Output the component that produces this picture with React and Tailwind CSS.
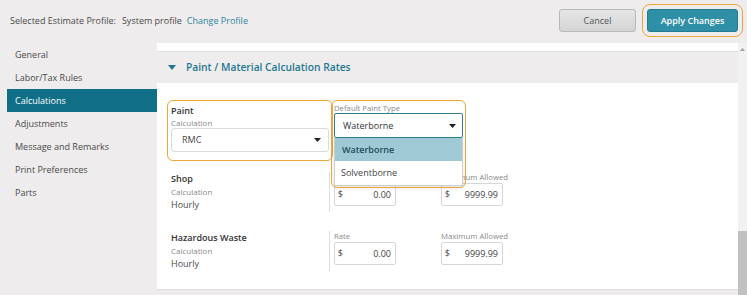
import React from 'react';

const navItems = [
  'General',
  'Labor/Tax Rules',
  'Calculations',
  'Adjustments',
  'Message and Remarks',
  'Print Preferences',
  'Parts',
];

const Caret = () => (
  <svg width="7" height="4" viewBox="0 0 7 4">
    <path d="M0 0h7L3.5 4z" fill="#222" />
  </svg>
);

const MoneyInput = ({ value }) => (
  <div className="flex h-[23px] w-[62px] items-center justify-between rounded-[2px] border border-[#d6d6d6] bg-white pl-[3px] pr-[4px] text-[9px] text-[#444]">
    <span className="text-[8.5px]">$</span>
    <span>{value}</span>
  </div>
);

const RateRow = ({ name, className = '' }) => (
  <div className={`flex ${className}`}>
    <div className="w-[158px] shrink-0">
      <div className="text-[9px] font-semibold leading-[14px] text-[#333]">{name}</div>
      <div className="text-[8px] leading-[12px] text-[#8a8a8a]">Calculation</div>
      <div className="text-[9px] leading-[14px] text-[#4a4a4a]">Hourly</div>
    </div>
    <div className="flex gap-[45px] border-l border-[#dedede] pl-[4px]">
      <div className="w-[62px]">
        <div className="text-[7.75px] leading-[11px] text-[#8a8a8a]">Rate</div>
        <MoneyInput value="0.00" />
      </div>
      <div className="w-[62px]">
        <div className="whitespace-nowrap text-[7.75px] leading-[11px] text-[#8a8a8a]">Maximum Allowed</div>
        <MoneyInput value="9999.99" />
      </div>
    </div>
  </div>
);

const App = () => {
  return (
    <div className="flex h-[295px] w-[747px] flex-col overflow-hidden bg-[#eeecec] font-['Open_Sans',sans-serif] text-[#4a4a4a]">
      {/* top bar */}
      <div className="flex h-[43px] shrink-0 items-center justify-between pb-[2px] pl-[10px] pr-[9px]">
        <div className="text-[9px] leading-none text-[#4a4a4a]">
          Selected Estimate Profile:
          <span className="ml-[6px]">System profile</span>
          <span className="ml-[5px] text-[#2b84a0]">Change Profile</span>
        </div>
        <div className="flex items-center gap-[11px]">
          <button className="h-[23px] w-[77px] rounded-[3px] border border-[#b8b8b8] bg-gradient-to-b from-[#e6e6e6] to-[#d4d4d4] text-[9px] text-[#555]">
            Cancel
          </button>
          <button className="h-[23px] w-[91px] rounded-[3px] border border-[#237b92] bg-[#2f8fa7] text-[9px] font-semibold text-white outline-[1.5px] outline-solid outline-[#f0a53b] outline-offset-[4px]">
            Apply Changes
          </button>
        </div>
      </div>

      <div className="flex min-h-0 flex-1">
        {/* sidebar */}
        <nav className="w-[157px] shrink-0 pl-[7px]">
          {navItems.map((item) => (
            <div
              key={item}
              className={
                item === 'Calculations'
                  ? 'h-[23px] bg-[#116e87] pl-[8px] text-[9px] leading-[23px] text-white'
                  : 'h-[23px] pl-[8px] text-[9px] leading-[23px] text-[#4a4a4a]'
              }
            >
              {item}
            </div>
          ))}
        </nav>

        {/* main panel */}
        <div className="flex min-w-0 flex-1 flex-col">
          <div className="h-[9px] shrink-0 border-b border-[#e2e2e2] bg-white" />
          <div className="flex h-[31px] shrink-0 items-center gap-[10px] pl-[11px]">
            <svg width="8" height="5" viewBox="0 0 8 5">
              <path d="M0 0h8L4 5z" fill="#1f7891" />
            </svg>
            <span className="text-[10.25px] font-semibold text-[#1f7891]">Paint / Material Calculation Rates</span>
          </div>

          <div className="flex-1 border-b border-[#dcdcdc] bg-white pl-[14px] pt-[20px]">
            {/* Paint row */}
            <div className="flex items-start gap-[5px]">
              <div className="mt-[1px] w-[158px] rounded-[2px] pb-[5px] outline-[1.5px] outline-solid outline-[#f0a53b] outline-offset-[3px]">
                <div className="text-[9px] font-semibold leading-[14px] text-[#333]">Paint</div>
                <div className="text-[8px] leading-[10px] text-[#8a8a8a]">Calculation</div>
                <div className="flex h-[24px] items-center justify-between rounded-[3px] border border-[#dadada] bg-white pl-[10px] pr-[7px] text-[9px] text-[#444]">
                  <span>RMC</span>
                  <Caret />
                </div>
              </div>

              <div className="relative z-10 w-[129px]">
                <div className="text-[7.75px] leading-[10px] text-[#8a8a8a]">Default Paint Type</div>
                <div className="flex h-[25px] items-center justify-between rounded-[2px] border border-[#2e7f92] bg-white pl-[8px] pr-[6px] text-[9px] text-[#333]">
                  <span>Waterborne</span>
                  <Caret />
                </div>
                <div className="absolute left-0 right-0 top-full border border-t-0 border-[#cfcfcf] bg-white shadow-[0_2px_4px_rgba(0,0,0,0.12)]">
                  <div className="h-[23px] bg-[#9fc9d4] pl-[7px] text-[9px] font-semibold leading-[23px] text-[#1b4e5c]">Waterborne</div>
                  <div className="h-[24px] pl-[6px] text-[9px] leading-[24px] text-[#444]">Solventborne</div>
                </div>
                <div className="pointer-events-none absolute -left-[3px] -right-[3px] -top-[3px] -bottom-[50px] rounded-[6px] border-[1.5px] border-[#f0a53b]" />
              </div>
            </div>

            <RateRow name="Shop" className="mt-[15px]" />
            <RateRow name="Hazardous Waste" className="mt-[19px]" />
          </div>
          <div className="h-[5px] shrink-0" />
        </div>

        {/* scrollbar */}
        <div className="flex w-[9px] shrink-0 flex-col bg-[#f1f1f1]">
          <div className="flex h-[12px] items-center justify-center">
            <svg width="5" height="3" viewBox="0 0 5 3">
              <path d="M0 3h5L2.5 0z" fill="#a3a3a3" />
            </svg>
          </div>
          <div className="flex-1" />
          <div className="h-[64px] bg-[#c1c1c1]" />
        </div>
      </div>
    </div>
  );
};

export default App;
